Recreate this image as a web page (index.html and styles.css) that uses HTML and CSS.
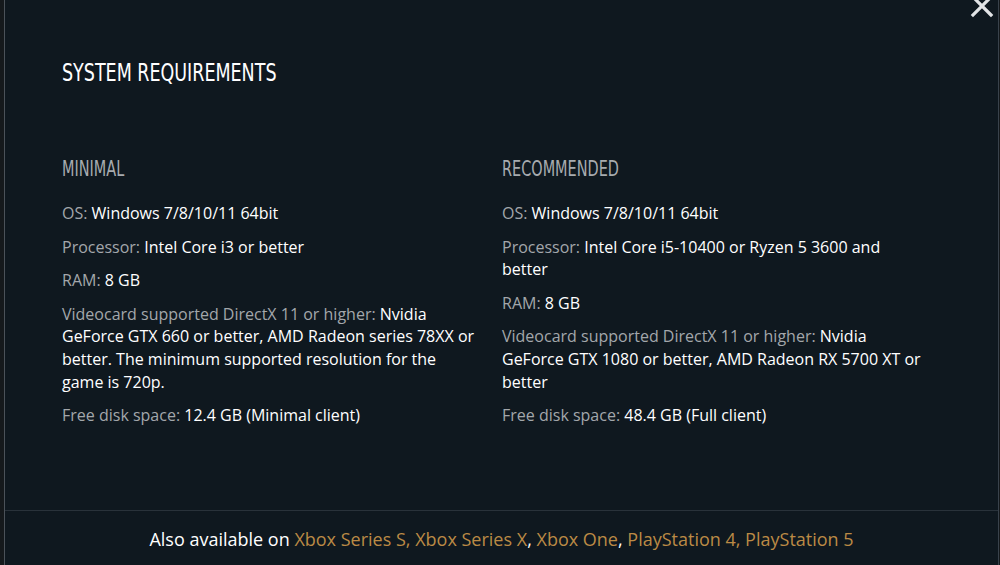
FILE: index.html
```html
<!DOCTYPE html>
<html lang="en">
<head>
<meta charset="utf-8">
<title>System requirements</title>
<link rel="stylesheet" href="styles.css">
</head>
<body>
<div class="page">
  <div class="modal">
    <button class="close" aria-label="Close">
      <svg viewBox="0 0 24 24" width="24" height="24"><path d="M3 3 L21 21 M21 3 L3 21" stroke="#e2e4e6" stroke-width="3.2" stroke-linecap="square" fill="none"/></svg>
    </button>
    <div class="content">
      <h1 class="title"><span class="cond">SYSTEM REQUIREMENTS</span></h1>
      <div class="cols">
        <section class="col col-min">
          <h2 class="subtitle"><span class="cond">MINIMAL</span></h2>
          <p class="req"><span class="lbl">OS:</span> Windows 7/8/10/11 64bit</p>
          <p class="req"><span class="lbl">Processor:</span> Intel Core i3 or better</p>
          <p class="req"><span class="lbl">RAM:</span> 8 GB</p>
          <p class="req"><span class="lbl">Videocard supported DirectX 11 or higher:</span> Nvidia GeForce GTX 660 or better, AMD Radeon series 78XX or better. The minimum supported resolution for the game is 720p.</p>
          <p class="req"><span class="lbl">Free disk space:</span> 12.4 GB (Minimal client)</p>
        </section>
        <section class="col col-rec">
          <h2 class="subtitle"><span class="cond">RECOMMENDED</span></h2>
          <p class="req"><span class="lbl">OS:</span> Windows 7/8/10/11 64bit</p>
          <p class="req"><span class="lbl">Processor:</span> Intel Core i5-10400 or Ryzen 5 3600 and better</p>
          <p class="req"><span class="lbl">RAM:</span> 8 GB</p>
          <p class="req"><span class="lbl">Videocard supported DirectX 11 or higher:</span> Nvidia GeForce GTX 1080 or better, AMD Radeon RX 5700 XT or better</p>
          <p class="req"><span class="lbl">Free disk space:</span> 48.4 GB (Full client)</p>
        </section>
      </div>
    </div>
    <footer class="footer">
      <p>Also available on <a href="#">Xbox Series S, Xbox Series X</a>, <a href="#">Xbox One</a>, <a href="#">PlayStation 4, PlayStation 5</a></p>
    </footer>
  </div>
</div>
</body>
</html>
```
FILE: styles.css
```css
* { box-sizing: border-box; }
html, body { margin: 0; padding: 0; }
body {
  background: #15191c;
  font-family: "Open Sans", "Noto Sans", sans-serif;
  color: #ffffff;
}
.page {
  display: flex;
  width: 1000px;
  height: 565px;
  overflow: hidden;
}
.modal {
  position: relative;
  margin-left: 4px;
  width: 995px;
  height: 565px;
  background: #0f181f;
  border-left: 1px solid #4b5259;
  border-right: 1px solid #39424b;
  display: flex;
  flex-direction: column;
}
.close {
  position: absolute;
  top: -6px;
  right: 4px;
  width: 24px;
  height: 24px;
  padding: 0;
  border: 0;
  background: transparent;
  display: block;
}
.close svg { display: block; }
.content {
  flex: 1;
  padding: 57px 0 0 57px;
}
.cond {
  display: inline-block;
  font-family: "Liberation Sans Narrow", "DejaVu Sans Condensed", "Liberation Sans", sans-serif;
  transform-origin: left center;
}
.title {
  margin: 0;
  font-weight: 400;
  font-size: 25px;
  line-height: 28px;
  color: #ffffff;
}
.title .cond { transform: scaleX(0.778); }
.cols {
  display: grid;
  grid-template-columns: 440px 440px;
  margin-top: 69px;
}
.col-min { padding-right: 25px; }
.col-rec { padding-right: 15px; }
.subtitle {
  margin: 0 0 21px;
  font-weight: 400;
  font-size: 21px;
  line-height: 24px;
  color: #a7abaf;
}
.subtitle .cond { transform: scaleX(0.765); }
.req {
  margin: 0 0 11px;
  font-size: 16px;
  font-weight: 400;
  line-height: 22.6px;
  color: #ffffff;
}
.lbl { color: #a3a7ab; }
.footer {
  height: 55px;
  border-top: 1px solid #29323a;
  display: flex;
  align-items: center;
  justify-content: center;
}
.footer p {
  margin: 0;
  font-size: 18px;
  line-height: 24px;
  color: #ffffff;
  padding-top: 1px;
}
.footer a {
  color: #bb8a45;
  text-decoration: none;
}
```
